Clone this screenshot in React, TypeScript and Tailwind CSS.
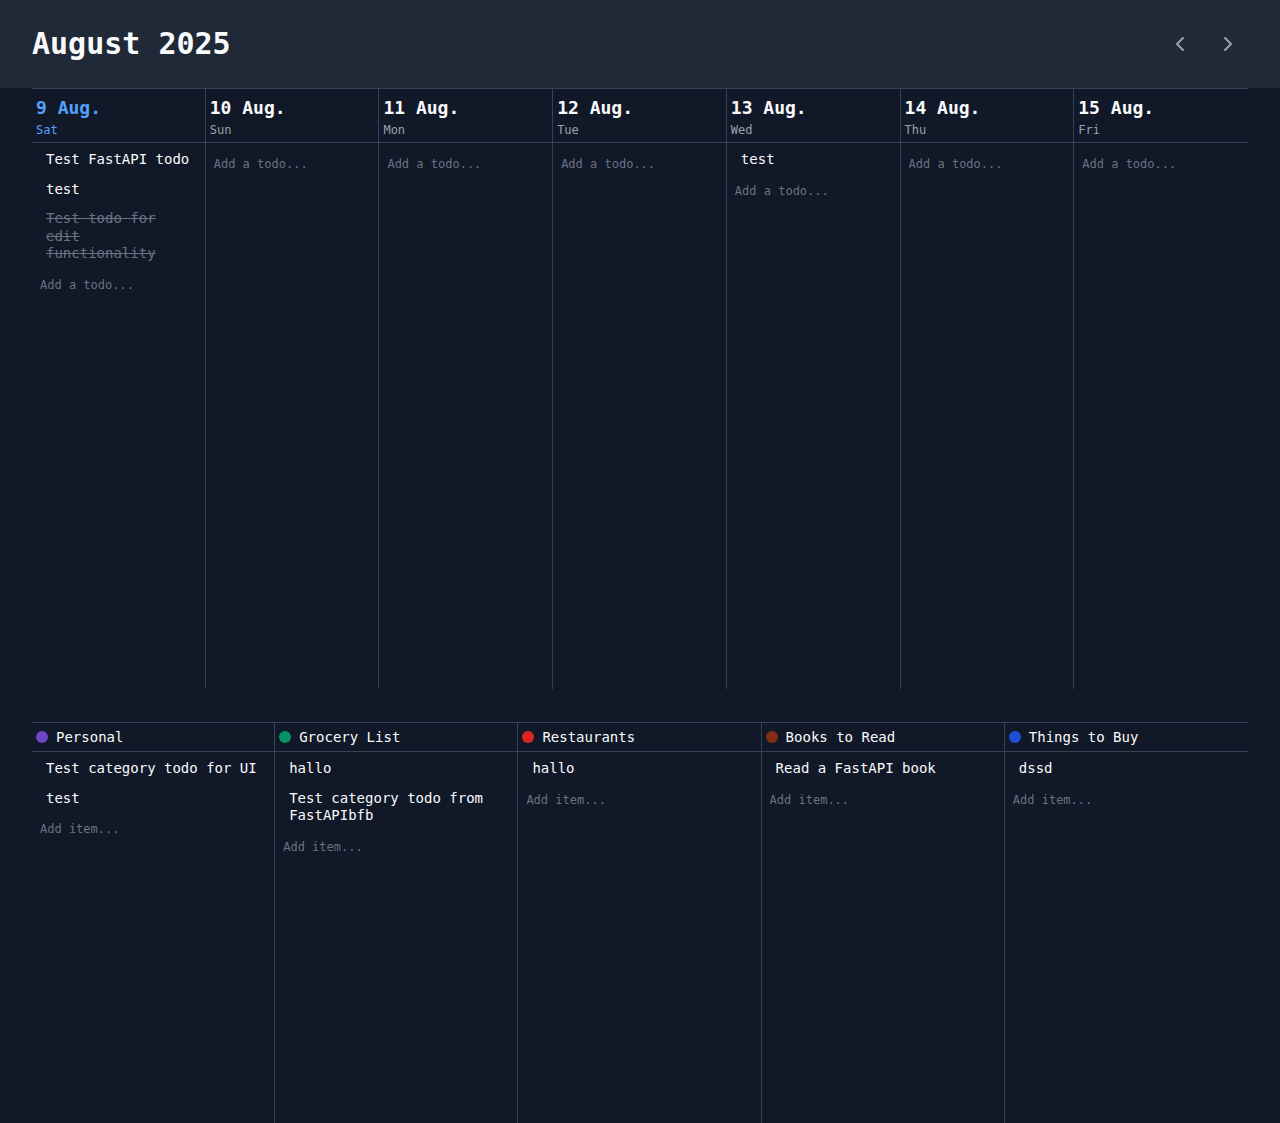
import { ChevronLeft, ChevronRight } from "lucide-react";

interface Todo {
	id: number;
	title: string;
	done?: boolean;
}

interface Day {
	date: string;
	weekday: string;
	today?: boolean;
	todos: Todo[];
}

interface Category {
	name: string;
	color: string;
	items: Todo[];
}

const days: Day[] = [
	{
		date: "9 Aug.",
		weekday: "Sat",
		today: true,
		todos: [
			{ id: 1, title: "Test FastAPI todo" },
			{ id: 2, title: "test" },
			{ id: 3, title: "Test todo for edit functionality", done: true },
		],
	},
	{ date: "10 Aug.", weekday: "Sun", todos: [] },
	{ date: "11 Aug.", weekday: "Mon", todos: [] },
	{ date: "12 Aug.", weekday: "Tue", todos: [] },
	{ date: "13 Aug.", weekday: "Wed", todos: [{ id: 4, title: "test" }] },
	{ date: "14 Aug.", weekday: "Thu", todos: [] },
	{ date: "15 Aug.", weekday: "Fri", todos: [] },
];

const categories: Category[] = [
	{
		name: "Personal",
		color: "bg-[#6e45c9]",
		items: [
			{ id: 1, title: "Test category todo for UI" },
			{ id: 2, title: "test" },
		],
	},
	{
		name: "Grocery List",
		color: "bg-[#069467]",
		items: [
			{ id: 3, title: "hallo" },
			{ id: 4, title: "Test category todo from FastAPIbfb" },
		],
	},
	{
		name: "Restaurants",
		color: "bg-[#dc2626]",
		items: [{ id: 5, title: "hallo" }],
	},
	{
		name: "Books to Read",
		color: "bg-[#822f14]",
		items: [{ id: 6, title: "Read a FastAPI book" }],
	},
	{
		name: "Things to Buy",
		color: "bg-[#1d4ed8]",
		items: [{ id: 7, title: "dssd" }],
	},
];

function TodoItem({ todo }: { todo: Todo }) {
	return (
		<div
			className={`px-1.5 py-1.5 text-sm leading-tight break-words ${
				todo.done ? "text-gray-500 line-through" : "text-gray-50"
			}`}
		>
			{todo.title}
		</div>
	);
}

function AddInput({ placeholder, hasItems }: { placeholder: string; hasItems: boolean }) {
	return (
		<input
			type="text"
			placeholder={placeholder}
			className={`w-full bg-transparent py-1 text-xs leading-4 text-gray-200 placeholder:text-gray-500 outline-none ${
				hasItems ? "mt-1" : "mt-[9px]"
			}`}
		/>
	);
}

export default function App() {
	return (
		<div className="min-h-screen bg-[#111827] font-['DejaVu_Sans_Mono',monospace] text-white">
			{/* Month header */}
			<header className="flex h-[88px] items-center justify-between bg-[#1f2937] px-8">
				<h1 className="text-3xl font-bold text-gray-50">August 2025</h1>
				<div className="flex items-center gap-2 text-gray-400">
					<button className="p-2">
						<ChevronLeft size={24} strokeWidth={2} />
					</button>
					<button className="p-2">
						<ChevronRight size={24} strokeWidth={2} />
					</button>
				</div>
			</header>

			<div className="px-8">
				{/* Week view */}
				<div className="grid h-[601px] grid-cols-7 border-t border-gray-700">
					{days.map((day, i) => (
						<div
							key={day.date}
							className={`flex flex-col ${i < days.length - 1 ? "border-r border-gray-700" : ""}`}
						>
							<div className="border-b border-gray-700 px-1 pt-[7px] pb-1">
								<div
									className={`text-lg leading-6 font-bold ${
										day.today ? "text-blue-400" : "text-gray-50"
									}`}
								>
									{day.date}
								</div>
								<div
									className={`mt-[2px] text-xs leading-4 ${
										day.today ? "text-blue-400" : "text-gray-400"
									}`}
								>
									{day.weekday}
								</div>
							</div>
							<div className={`flex flex-col px-2 pb-2 ${day.todos.length > 0 ? "pt-0.5" : ""}`}>
								{day.todos.map((todo) => (
									<TodoItem key={todo.id} todo={todo} />
								))}
								<AddInput placeholder="Add a todo..." hasItems={day.todos.length > 0} />
							</div>
						</div>
					))}
				</div>

				{/* Categories */}
				<div className="mt-[33px] grid h-[420px] grid-cols-5 border-t border-gray-700">
					{categories.map((cat, i) => (
						<div
							key={cat.name}
							className={`flex flex-col ${i < categories.length - 1 ? "border-r border-gray-700" : ""}`}
						>
							<div className="flex items-center gap-2 border-b border-gray-700 px-1 py-1">
								<span className={`h-3 w-3 shrink-0 rounded-full ${cat.color}`} />
								<span className="text-sm leading-5 text-gray-50">{cat.name}</span>
							</div>
							<div className={`flex flex-col px-2 pb-2 ${cat.items.length > 0 ? "pt-0.5" : ""}`}>
								{cat.items.map((item) => (
									<TodoItem key={item.id} todo={item} />
								))}
								<AddInput placeholder="Add item..." hasItems={cat.items.length > 0} />
							</div>
						</div>
					))}
				</div>
			</div>
		</div>
	);
}
